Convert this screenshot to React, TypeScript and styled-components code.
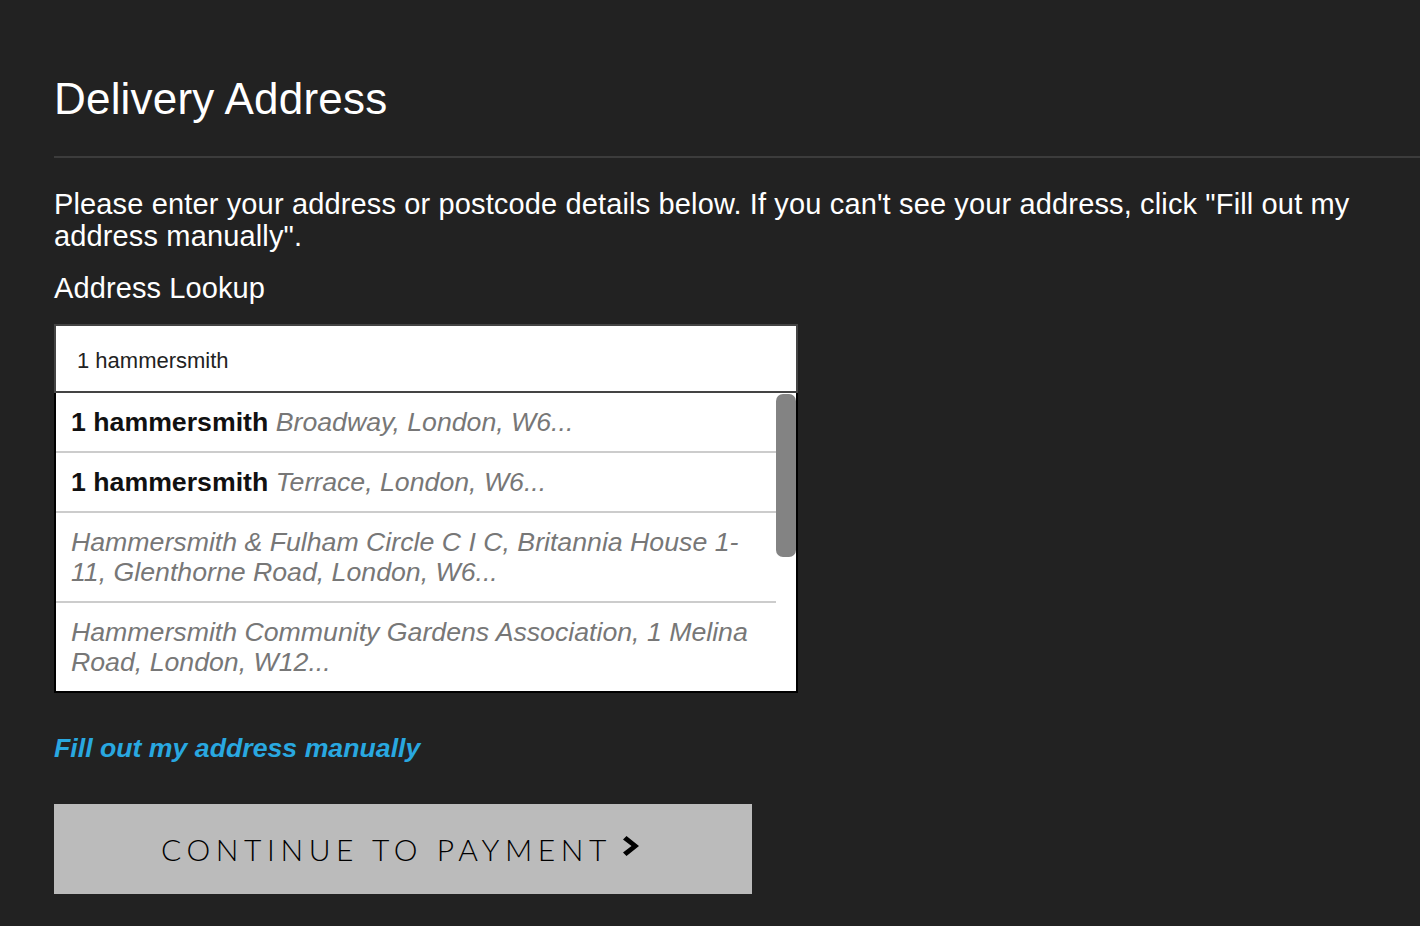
import React from "react";
import styled, { createGlobalStyle } from "styled-components";

const GlobalStyle = createGlobalStyle`
  html, body {
    margin: 0;
    padding: 0;
    background: #222222;
  }
  body {
    font-family: "Liberation Sans", Arial, sans-serif;
    color: #ffffff;
  }
  * { box-sizing: border-box; }
`;

const Page = styled.main`
  min-height: 926px;
  padding-left: 54px;
  display: flex;
  flex-direction: column;
  align-items: flex-start;
`;

const Header = styled.header`
  align-self: stretch;
  padding-top: 73px;
  padding-bottom: 31px;
  border-bottom: 2px solid #3c3c3c;
`;

const Title = styled.h1`
  margin: 0;
  font-size: 44px;
  line-height: 52px;
  font-weight: 400;
  letter-spacing: 0.2px;
  color: #ffffff;
`;

const Intro = styled.p`
  margin: 30px 0 0;
  padding-right: 20px;
  font-size: 29px;
  line-height: 32px;
  letter-spacing: 0.14px;
`;

const Label = styled.label`
  display: block;
  margin-top: 20px;
  font-size: 29px;
  line-height: 32px;
  letter-spacing: 0.1px;
`;

const Lookup = styled.div`
  margin-top: 20px;
  width: 744px;
  display: flex;
  flex-direction: column;
`;

const SearchInput = styled.input`
  height: 69px;
  width: 100%;
  border: 2px solid #444444;
  background: #ffffff;
  padding: 4px 21px 0;
  font-family: "Liberation Sans", Arial, sans-serif;
  font-size: 22px;
  color: #222222;
  outline: none;
`;

const Results = styled.div`
  display: flex;
  height: 300px;
  background: #ffffff;
  border: 2px solid #000000;
  border-top: none;
`;

const ResultList = styled.ul`
  list-style: none;
  margin: 0;
  padding: 0;
  flex: 1;
  overflow: hidden;
`;

const Result = styled.li<{ $last?: boolean }>`
  padding: 14px 15px;
  font-size: 26.7px;
  line-height: 30px;
  border-bottom: ${(p) => (p.$last ? "none" : "2px solid #cccccc")};
  cursor: pointer;
`;

const Match = styled.strong`
  font-weight: 700;
  color: #111111;
`;

const Rest = styled.em`
  font-style: italic;
  color: #777777;
`;

const Track = styled.div`
  width: 20px;
  display: flex;
  flex-direction: column;
`;

const Thumb = styled.div`
  margin-top: 1px;
  height: 163px;
  border-radius: 7px;
  background: #838383;
`;

const ManualLink = styled.a`
  margin-top: 40px;
  font-size: 26.7px;
  line-height: 30px;
  font-weight: 700;
  font-style: italic;
  color: #29a8e0;
  text-decoration: none;
  cursor: pointer;
`;

const ContinueButton = styled.button`
  margin-top: 41px;
  width: 698px;
  height: 90px;
  border: none;
  background: #bbbbbb;
  display: flex;
  align-items: center;
  justify-content: center;
  gap: 11px;
  padding: 0 6px 0 0;
  font-family: Lato, "Liberation Sans", sans-serif;
  font-weight: 300;
  font-size: 30px;
  letter-spacing: 5.6px;
  color: #000000;
  cursor: pointer;
`;

const ChevronIcon = styled.svg`
  margin-top: -7px;
  flex: none;
`;

const Chevron = () => (
  <ChevronIcon width="16" height="20" viewBox="0 0 16 20" aria-hidden="true">
    <path d="M3.5 0 L16 10 L3.5 20 L0 16.5 L8.5 10 L0 3.5 Z" fill="#000" />
  </ChevronIcon>
);

const results = [
  { match: "1 hammersmith", rest: "Broadway, London, W6..." },
  { match: "1 hammersmith", rest: "Terrace, London, W6..." },
  { match: "", rest: "Hammersmith & Fulham Circle C I C, Britannia House 1-11, Glenthorne Road, London, W6..." },
  { match: "", rest: "Hammersmith Community Gardens Association, 1 Melina Road, London, W12..." },
];

export default function App() {
  return (
    <>
      <GlobalStyle />
      <Page>
        <Header>
          <Title>Delivery Address</Title>
        </Header>
        <Intro>
          Please enter your address or postcode details below. If you can't see your address, click "Fill out my address manually".
        </Intro>
        <Label htmlFor="lookup">Address Lookup</Label>
        <Lookup>
          <SearchInput id="lookup" defaultValue="1 hammersmith" />
          <Results>
            <ResultList>
              {results.map((r, i) => (
                <Result key={i} $last={i === results.length - 1}>
                  {r.match && <Match>{r.match} </Match>}
                  <Rest>{r.rest}</Rest>
                </Result>
              ))}
            </ResultList>
            <Track>
              <Thumb />
            </Track>
          </Results>
        </Lookup>
        <ManualLink>Fill out my address manually</ManualLink>
        <ContinueButton>
          <span>CONTINUE TO PAYMENT</span>
          <Chevron />
        </ContinueButton>
      </Page>
    </>
  );
}
